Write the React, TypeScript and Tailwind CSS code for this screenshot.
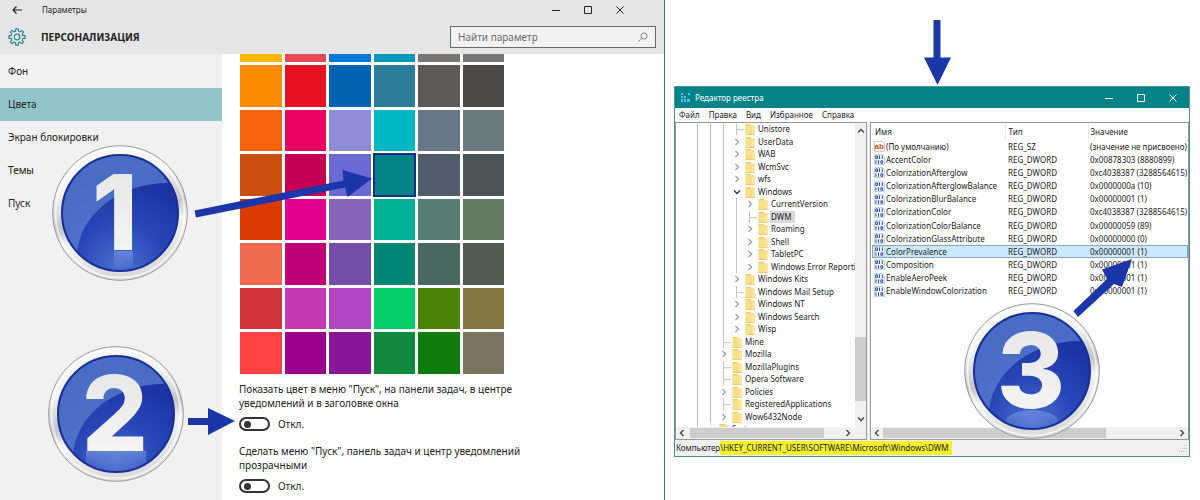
import React from 'react';

const swatchRows = [
  ['#ffb900', '#e74856', '#0078d7', '#0099bc', '#7a7574', '#767676'],
  ['#ff8c00', '#e81123', '#0063b1', '#2d7d9a', '#5d5a58', '#4c4a48'],
  ['#f7630c', '#ea005e', '#8e8cd8', '#00b7c3', '#68768a', '#69797e'],
  ['#ca5010', '#c30052', '#6b69d6', '#038387', '#515c6b', '#4a5459'],
  ['#da3b01', '#e3008c', '#8764b8', '#00b294', '#567c73', '#647c64'],
  ['#ef6950', '#bf0077', '#744da9', '#018574', '#486860', '#525e54'],
  ['#d13438', '#c239b3', '#b146c2', '#00cc6a', '#498205', '#847545'],
  ['#ff4343', '#9a0089', '#881798', '#10893e', '#107c10', '#7e735f'],
];

const navItems = ['Фон', 'Цвета', 'Экран блокировки', 'Темы', 'Пуск'];

type NodeState = 'leaf' | 'closed' | 'open';

interface TreeNode {
  name: string;
  depth: number;
  state: NodeState;
}

const tree: TreeNode[] = [
  { name: 'Unistore', depth: 3, state: 'leaf' },
  { name: 'UserData', depth: 3, state: 'closed' },
  { name: 'WAB', depth: 3, state: 'closed' },
  { name: 'WcmSvc', depth: 3, state: 'closed' },
  { name: 'wfs', depth: 3, state: 'closed' },
  { name: 'Windows', depth: 3, state: 'open' },
  { name: 'CurrentVersion', depth: 4, state: 'closed' },
  { name: 'DWM', depth: 4, state: 'leaf' },
  { name: 'Roaming', depth: 4, state: 'closed' },
  { name: 'Shell', depth: 4, state: 'closed' },
  { name: 'TabletPC', depth: 4, state: 'closed' },
  { name: 'Windows Error Reporti', depth: 4, state: 'closed' },
  { name: 'Windows Kits', depth: 3, state: 'closed' },
  { name: 'Windows Mail Setup', depth: 3, state: 'leaf' },
  { name: 'Windows NT', depth: 3, state: 'closed' },
  { name: 'Windows Search', depth: 3, state: 'closed' },
  { name: 'Wisp', depth: 3, state: 'closed' },
  { name: 'Mine', depth: 2, state: 'leaf' },
  { name: 'Mozilla', depth: 2, state: 'closed' },
  { name: 'MozillaPlugins', depth: 2, state: 'leaf' },
  { name: 'Opera Software', depth: 2, state: 'leaf' },
  { name: 'Policies', depth: 2, state: 'closed' },
  { name: 'RegisteredApplications', depth: 2, state: 'leaf' },
  { name: 'Wow6432Node', depth: 2, state: 'closed' },
  { name: 'System', depth: 1, state: 'leaf' },
];

const values = [
  ['(По умолчанию)', 'REG_SZ', '(значение не присвоено)'],
  ['AccentColor', 'REG_DWORD', '0x00878303 (8880899)'],
  ['ColorizationAfterglow', 'REG_DWORD', '0xc4038387 (3288564615)'],
  ['ColorizationAfterglowBalance', 'REG_DWORD', '0x0000000a (10)'],
  ['ColorizationBlurBalance', 'REG_DWORD', '0x00000001 (1)'],
  ['ColorizationColor', 'REG_DWORD', '0xc4038387 (3288564615)'],
  ['ColorizationColorBalance', 'REG_DWORD', '0x00000059 (89)'],
  ['ColorizationGlassAttribute', 'REG_DWORD', '0x00000000 (0)'],
  ['ColorPrevalence', 'REG_DWORD', '0x00000001 (1)'],
  ['Composition', 'REG_DWORD', '0x00000001 (1)'],
  ['EnableAeroPeek', 'REG_DWORD', '0x00000001 (1)'],
  ['EnableWindowColorization', 'REG_DWORD', '0x00000001 (1)'],
];

const Chevron: React.FC<{ dir: 'up' | 'down' | 'left' | 'right'; color?: string }> = ({ dir, color = '#444' }) => {
  const paths = {
    up: 'M1 5.5 4 2.5 7 5.5',
    down: 'M1 2.5 4 5.5 7 2.5',
    left: 'M5.5 1 2.5 4 5.5 7',
    right: 'M2.5 1 5.5 4 2.5 7',
  };
  return (
    <svg viewBox="0 0 8 8" className="size-2 shrink-0" fill="none" stroke={color} strokeWidth="1.3" aria-hidden="true">
      <path d={paths[dir]} />
    </svg>
  );
};

const WindowButtons: React.FC<{ className: string }> = ({ className }) => (
  <div className={className}>
    <button aria-label="Свернуть">
      <svg viewBox="0 0 8 8" className="size-2" stroke="currentColor"><path d="M0 4.5h8" /></svg>
    </button>
    <button aria-label="Развернуть">
      <svg viewBox="0 0 8 8" className="size-2" stroke="currentColor" fill="none"><path d="M.5.5h7v7h-7z" /></svg>
    </button>
    <button aria-label="Закрыть">
      <svg viewBox="0 0 8 8" className="size-2" stroke="currentColor"><path d="m.5.5 7 7m0-7-7 7" /></svg>
    </button>
  </div>
);

const GearIcon = () => {
  // eight square teeth around the rim
  const teeth = Array.from({ length: 8 }, (_, i) => {
    const at = (r: number, deg: number) => {
      const a = ((i * 45 + deg) * Math.PI) / 180;
      return `${(9 + r * Math.cos(a)).toFixed(2)} ${(9 + r * Math.sin(a)).toFixed(2)}`;
    };
    return `${at(6, -14)} L${at(8.2, -9)} L${at(8.2, 9)} L${at(6, 14)}`;
  });
  return (
    <svg viewBox="0 0 18 18" className="size-[18px]" fill="none" stroke="#25898b" strokeWidth="1.2" strokeLinejoin="round" aria-hidden="true">
      <path d={`M${teeth.join(' L')} Z`} />
      <circle cx="9" cy="9" r="2.8" />
    </svg>
  );
};

const FolderIcon = () => (
  <svg viewBox="0 0 10 12" className="h-3 w-[10px] shrink-0" aria-hidden="true">
    <path d="M.5 1h5.5v1.5h3.5V11.5H.5z" fill="#f3cf68" />
    <path d="M1 2.5h5v8.5H1z" fill="#fbe08a" />
    <path d="M6.5 3.5h3v8h-3z" fill="#ffe79c" />
    <path d="M.5 11.5h9" stroke="#e3bb4e" strokeWidth=".6" />
  </svg>
);

const StringIcon = () => (
  <svg viewBox="0 0 11 11" className="size-[11px] shrink-0" aria-hidden="true">
    <path d="M.5.5h8l2 2v8H.5z" fill="#fff" stroke="#c9b5ab" strokeWidth=".7" />
    <text x="0.6" y="8" fontFamily="Liberation Sans, sans-serif" fontSize="8" fontWeight="700" fill="#c9492a">ab</text>
  </svg>
);

const DwordIcon = () => (
  <svg viewBox="0 0 11 11" className="size-[11px] shrink-0" fill="none" aria-hidden="true">
    <path d="M.5.5h8l2 2v8H.5z" fill="#f3f6fd" stroke="#b5c3e2" strokeWidth=".7" />
    <g stroke="#2b50b4">
      <path d="M1.7 1.9h1.8v2.6H1.7zM5.5 1.4V5M8.3 1.4V5M1.9 6.3v3.5M4.5 6.3v3.5M6.9 6.8h1.8v2.5H6.9z" />
    </g>
  </svg>
);

const Badge: React.FC<{ n: number; className: string }> = ({ n, className }) => (
  <svg viewBox="0 0 136 136" className={`absolute size-[136px] ${className}`}>
    <defs>
      <linearGradient id={`ring${n}`} x1="0" y1="0" x2="0.25" y2="1">
        <stop offset="0" stopColor="#fafafa" />
        <stop offset="0.35" stopColor="#f4f4f4" />
        <stop offset="0.6" stopColor="#c4c4c6" />
        <stop offset="0.72" stopColor="#f2f2f2" />
        <stop offset="1" stopColor="#dcdcdc" />
      </linearGradient>
      <radialGradient id={`face${n}`} cx="0.5" cy="0.95" r="0.75">
        <stop offset="0" stopColor="#4a6fd0" />
        <stop offset="0.5" stopColor="#2848b8" />
        <stop offset="1" stopColor="#1b33a4" />
      </radialGradient>
      <linearGradient id={`digit${n}`} x1="0" y1="0" x2="0" y2="1">
        <stop offset="0" stopColor="#e4e4e4" />
        <stop offset="1" stopColor="#f8f8f8" />
      </linearGradient>
      <linearGradient id={`glow${n}`} x1="0" y1="0" x2="0" y2="1">
        <stop offset="0" stopColor="#7d9be6" stopOpacity="0.6" />
        <stop offset="1" stopColor="#7d9be6" stopOpacity="0" />
      </linearGradient>
      <clipPath id={`clip${n}`}>
        <circle cx="68" cy="68" r="57" />
      </clipPath>
    </defs>
    <circle cx="68" cy="68" r="67.3" fill={`url(#ring${n})`} stroke="#9a9a9e" strokeWidth="1" />
    <circle cx="68" cy="68" r="64.5" fill="none" stroke="#fff" strokeOpacity="0.6" strokeWidth="2" />
    <circle cx="68" cy="68" r="58" fill={`url(#face${n})`} stroke="#1a2f96" strokeWidth="2" />
    <g clipPath={`url(#clip${n})`}>
      <path d="M0 0H136V40C104 34 76 42 54 58 36 72 26 90 25 110L0 120Z" fill="#5a80cf" fillOpacity="0.75" />
      {n === 3 ? (
        <ellipse cx="68" cy="120" rx="27" ry="13" fill={`url(#glow${n})`} />
      ) : (
        <path d={n === 1 ? 'M62 106h19v18H62z' : 'M38 105h60v22H38z'} fill={`url(#glow${n})`} />
      )}
    </g>
    <text
      x={n === 1 ? 63 : 67}
      y="105"
      textAnchor="middle"
      fontFamily="Inter, Liberation Sans, sans-serif"
      fontSize="104"
      fontWeight="800"
      fill={`url(#digit${n})`}
    >
      {n}
    </text>
  </svg>
);

const Toggle: React.FC<{ id: string; text: string }> = ({ id, text }) => (
  <div>
    <p id={`${id}-text`} className="leading-[14px]">{text}</p>
    <div className="mt-1 flex h-5 items-center gap-2">
      <input
        id={id}
        type="checkbox"
        role="switch"
        aria-describedby={`${id}-text`}
        className="flex h-[14px] w-[31px] appearance-none items-center rounded-full border-2 border-[#333] bg-white pl-[3px] before:size-[7px] before:rounded-full before:bg-[#333] before:content-['']"
      />
      <label htmlFor={id}>Откл.</label>
    </div>
  </div>
);

const SettingsWindow = () => (
  <section className="relative flex flex-col overflow-hidden border-r border-[#3d7f80] bg-white font-['Noto_Sans','Open_Sans',sans-serif] text-[10px] text-[#222]">
    <header className="bg-[#e6e6e6] pr-2">
      <div className="flex h-5 items-center pl-3">
        <button aria-label="Назад">
          <svg viewBox="0 0 10 8" className="h-2 w-[10px]" fill="none" stroke="#222" strokeWidth="1.2"><path d="M10 4H1M4.500.5 1 4l3.500 3.500" /></svg>
        </button>
        <span className="ml-5 flex-1 text-[8px]">Параметры</span>
        <WindowButtons className="flex gap-6 pr-8 text-[#222] [&>button]:h-2" />
      </div>
      <div className="flex h-[34px] items-center pl-2">
        <GearIcon />
        <h1 className="ml-[15px] flex-1 font-bold">ПЕРСОНАЛИЗАЦИЯ</h1>
        <div className="flex h-[22px] w-[206px] items-center border border-[#6a6a6a] bg-[#f2f2f2] px-[7px]">
          <input
            aria-label="Найти параметр"
            placeholder="Найти параметр"
            className="min-w-0 flex-1 bg-transparent placeholder:text-[#6a6a6a] focus:outline-none"
          />
          <svg viewBox="0 0 10 10" className="size-[10px]" fill="none" stroke="#888" aria-hidden="true"><circle cx="6" cy="4" r="3" /><path d="M4 6 .5 9.500" /></svg>
        </div>
      </div>
    </header>
    <div className="flex flex-1">
      <nav className="w-[222px] shrink-0 bg-[#f1f1f1] pt-px">
        {navItems.map((item) => (
          <a
            key={item}
            href="#"
            className={`flex h-[33px] items-center pl-2 ${item === 'Цвета' ? 'bg-[#91c5c8]' : ''}`}
          >
            {item}
          </a>
        ))}
      </nav>
      <div className="px-[17px]">
        <div className="ml-px grid h-[320px] w-[264px] grid-cols-6 grid-rows-[8px_repeat(7,1fr)] gap-[3px]">
          {swatchRows.flat().map((color) => (
            <button
              key={color}
              aria-label={color}
              className={color === '#038387' ? 'outline-2 -outline-offset-1 outline-[#1d2f7c]' : ''}
              style={{ backgroundColor: color }}
            />
          ))}
        </div>
        <div className="mt-2 flex w-[290px] flex-col gap-2.5">
          <Toggle id="accent" text={'Показать цвет в меню "Пуск", на панели задач, в центре уведомлений и в заголовке окна'} />
          <Toggle id="transparent" text={'Сделать меню "Пуск", панель задач и центр уведомлений прозрачными'} />
        </div>
      </div>
    </div>

    <Badge n={1} className="left-[52px] top-[145px]" />
    <Badge n={2} className="left-[48px] top-[346px]" />
    <svg viewBox="0 0 200 270" className="absolute left-[180px] top-[170px] h-[270px] w-[200px]" fill="#1b36a8" aria-hidden="true">
      <path d="M14.500 40.500 163.500 10.500 162.500 0 192 8.500 167.500 27 165 17.500 16 47.500Z" />
      <path d="M8 248H28V238L55 251 28 265V255H8Z" />
    </svg>
  </section>
);

const TreeRow: React.FC<{ node: TreeNode }> = ({ node }) => (
  <li className="flex min-h-0 items-stretch overflow-hidden whitespace-nowrap pl-[15px]">
    {Array.from({ length: node.depth }, (_, i) => (
      <span key={i} className="flex w-[13px] shrink-0 justify-center">
        <span className="w-px bg-[#c4c4c4]" />
      </span>
    ))}
    {node.state === 'leaf' ? (
      <svg viewBox="0 0 15 12" className="h-full w-[15px] shrink-0" stroke="#c4c4c4" aria-hidden="true"><path d="M6.500 0v12M6.500 6.500H14" /></svg>
    ) : (
      <span className="flex w-[15px] shrink-0 items-center gap-1 pl-[3px]">
        <Chevron dir={node.state === 'open' ? 'down' : 'right'} color={node.state === 'open' ? '#333' : '#a0a0a0'} />
        <span className="h-px w-0.5 bg-[#bbb]" />
      </span>
    )}
    <FolderIcon />
    <span className={`ml-0.5 pl-px leading-3 ${node.name === 'DWM' ? 'bg-[#d9d9d9] pr-1' : ''}`}>{node.name}</span>
  </li>
);

const RegistryWindow = () => (
  <div className="relative border border-[#4c9293] bg-white font-['Noto_Sans','Open_Sans',sans-serif] text-[8px] text-[#222]">
    <header className="flex h-[21px] items-center bg-[#038387] pl-1.5 pr-2 text-white">
      <svg viewBox="0 0 10 10" className="size-[10px]" fill="#4cc4f4" aria-hidden="true">
        <path d="M0 0h2v2H0zM0 3h2v2H0zM0 6h2v3H0zM3 6h2v3H3zM6 6h3v3H6zM3 3h2v2H3zM7 0h2v2H7z" />
      </svg>
      <span className="ml-1 flex-1">Редактор реестра</span>
      <WindowButtons className="flex gap-6 pr-1 [&>button]:h-2" />
    </header>
    <nav className="flex h-[14px] items-center gap-[9px] pl-1">
      {['Файл', 'Правка', 'Вид', 'Избранное', 'Справка'].map((item) => (
        <button key={item}>{item}</button>
      ))}
    </nav>
    <div className="flex h-[318px] bg-[#f0f0f0]">
      <div className="flex w-[192px] shrink-0 flex-col border border-[#999] bg-white">
        <div className="flex min-h-0 flex-1">
          <ul className="grid min-w-0 flex-1 grid-rows-[repeat(24,1fr)_4px]">
            {tree.map((node) => (
              <TreeRow key={node.name} node={node} />
            ))}
          </ul>
          <div className="flex w-[11px] flex-col items-center bg-[#f0f0f0] py-1">
            <Chevron dir="up" />
            <div className="mb-[14px] mt-auto h-16 w-full bg-[#cdcdcd]" />
            <Chevron dir="down" />
          </div>
        </div>
        <div className="flex h-3 items-center bg-[#f0f0f0] pl-0.5 pr-[14px]">
          <Chevron dir="left" />
          <div className="ml-1 h-[10px] w-[134px] bg-[#cdcdcd]" />
          <span className="ml-auto"><Chevron dir="right" /></span>
        </div>
      </div>
      <div className="ml-[3px] flex min-w-0 flex-1 flex-col border border-[#999] bg-white">
        <div className="min-h-0 flex-1 overflow-hidden pl-px">
          <table className="h-[175px] w-full table-fixed whitespace-nowrap text-left">
            <colgroup>
              <col className="w-[133px]" />
              <col className="w-[83px]" />
              <col />
            </colgroup>
            <thead>
              <tr className="h-[17px]">
                <th className="border-r border-[#e8e8e8] pl-[3px] font-normal">Имя</th>
                <th className="border-r border-[#e8e8e8] pl-[3px] font-normal">Тип</th>
                <th className="pl-0.5 font-normal">Значение</th>
              </tr>
            </thead>
            <tbody>
              {values.map(([name, type, value]) => (
                <tr
                  key={name}
                  className={`leading-3 ${name === 'ColorPrevalence' ? 'bg-[#cce8ff] outline -outline-offset-1 outline-[#86a9bd]' : ''}`}
                >
                  <td className="pl-0.5">
                    <span className="flex items-center gap-px">
                      {type === 'REG_SZ' ? <StringIcon /> : <DwordIcon />}
                      {name}
                    </span>
                  </td>
                  <td className="pl-[3px]">{type}</td>
                  <td className="pl-0.5">{value}</td>
                </tr>
              ))}
            </tbody>
          </table>
        </div>
        <div className="flex h-3 items-center bg-[#f0f0f0] px-0.5">
          <Chevron dir="left" />
          <div className="ml-0.5 h-[10px] w-[223px] bg-[#cdcdcd]" />
          <span className="ml-auto"><Chevron dir="right" /></span>
        </div>
      </div>
    </div>
    <footer className="flex h-4 items-center bg-[#f0f0f0] pl-px">
      Компьютер
      <mark className="bg-[#f4f02c] pr-1 leading-[14px] text-[#222]">\HKEY_CURRENT_USER\SOFTWARE\Microsoft\Windows\DWM</mark>
      <svg viewBox="0 0 8 8" className="ml-auto mr-0.5 size-2" stroke="#b5b5b5" strokeDasharray="1 1" aria-hidden="true"><path d="M0 7.500h8M3 4.500h5M6 1.500h2" /></svg>
    </footer>

    <svg viewBox="0 0 36 66" className="absolute left-[245px] top-[-67px] h-[66px] w-[36px]" fill="#1b36a8" aria-hidden="true">
      <path d="M13.500 0H20.500V37.500H31L17.500 65 4 37.500H13.500Z" />
    </svg>
    <Badge n={3} className="left-[289px] top-[216px]" />
    <svg viewBox="0 0 60 60" className="absolute left-[398px] top-[171px] size-[60px]" fill="#1b36a8" aria-hidden="true">
      <path d="M.5 53 34 21 29 11.500 59 1 49 29 41 26 5 59Z" />
    </svg>
  </div>
);

export default function App() {
  return (
    <main className="grid min-h-screen grid-cols-[665fr_535fr] overflow-hidden bg-white">
      <SettingsWindow />
      <div className="pl-[9px] pr-[10px] pt-[86px]">
        <RegistryWindow />
      </div>
    </main>
  );
}
